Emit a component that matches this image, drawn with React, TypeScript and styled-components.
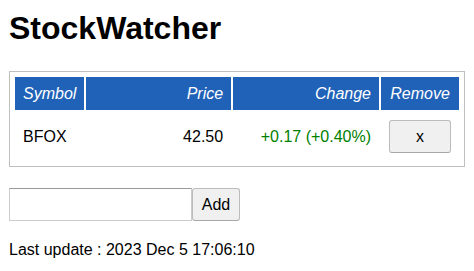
import React from "react";
import styled, { createGlobalStyle } from "styled-components";

const Global = createGlobalStyle`
  html, body { margin: 0; padding: 0; background: #ffffff; }
  body {
    font-family: "Liberation Sans", Arial, sans-serif;
    font-size: 16px;
    color: #000000;
  }
`;

const Page = styled.div`
  padding: 10px 9px 0 9px;
`;

const Title = styled.h1`
  margin: 0 0 24px 0;
  font-size: 32px;
  font-weight: bold;
  line-height: normal;
`;

const WatchList = styled.table`
  border: 1px solid #c0c0c0;
  padding: 3px;
  border-collapse: separate;
  border-spacing: 2px;
  margin-bottom: 21px;
`;

const HeaderCell = styled.td<{ $align?: "left" | "right" | "center"; $width?: number }>`
  background: #2062b8;
  color: #ffffff;
  font-style: italic;
  padding: 8px;
  line-height: 17px;
  text-align: ${(p) => p.$align || "left"};
  width: ${(p) => (p.$width ? `${p.$width}px` : "auto")};
`;

const Cell = styled.td<{ $align?: "left" | "right" | "center"; $color?: string }>`
  padding: 8px;
  line-height: 18px;
  vertical-align: middle;
  text-align: ${(p) => p.$align || "left"};
  color: ${(p) => p.$color || "#000000"};
`;

const PlainButton = styled.button<{ $w: number }>`
  box-sizing: border-box;
  width: ${(p) => p.$w}px;
  height: 33px;
  margin: 0;
  padding: 0;
  background: #f0f0f0;
  border: 1px solid #bcbcbc;
  border-bottom-color: #a8a8a8;
  border-radius: 3px;
  font-family: "Liberation Sans", Arial, sans-serif;
  font-size: 16px;
  color: #000000;
  vertical-align: middle;
`;

const AddPanel = styled.div`
  display: flex;
  align-items: flex-start;
  margin-bottom: 20px;
`;

const TextBox = styled.input`
  box-sizing: border-box;
  width: 183px;
  height: 33px;
  margin: 0;
  padding: 5px 4px;
  border: 1px solid #cccccc;
  border-top-color: #999999;
  font-family: "Liberation Sans", Arial, sans-serif;
  font-size: 16px;
  outline: none;
`;

const LastUpdate = styled.div`
  line-height: normal;
`;

export default function App() {
  return (
    <>
      <Global />
      <Page>
        <Title>StockWatcher</Title>
        <WatchList>
          <tbody>
            <tr>
              <HeaderCell>Symbol</HeaderCell>
              <HeaderCell $align="right" $width={129}>Price</HeaderCell>
              <HeaderCell $align="right" $width={130}>Change</HeaderCell>
              <HeaderCell $align="center">Remove</HeaderCell>
            </tr>
            <tr>
              <Cell>BFOX</Cell>
              <Cell $align="right">42.50</Cell>
              <Cell $align="right" $color="#008000">+0.17 (+0.40%)</Cell>
              <Cell $align="center">
                <PlainButton $w={62}>x</PlainButton>
              </Cell>
            </tr>
          </tbody>
        </WatchList>
        <AddPanel>
          <TextBox type="text" />
          <PlainButton $w={48}>Add</PlainButton>
        </AddPanel>
        <LastUpdate>Last update : 2023 Dec 5 17:06:10</LastUpdate>
      </Page>
    </>
  );
}
